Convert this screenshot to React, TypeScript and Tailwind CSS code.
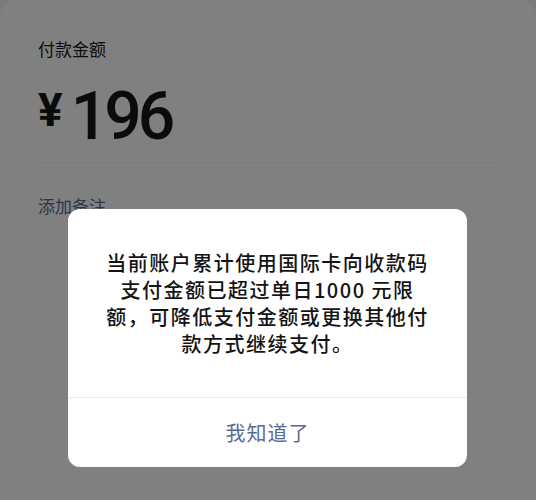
import React from 'react';

const cjk = { fontFamily: '"Noto Sans CJK SC", "Noto Sans", sans-serif' };
const num = { fontFamily: 'Roboto, "Noto Sans", sans-serif' };

function PayCard() {
  return (
    <div className="rounded-t-[16px] bg-[#808080] min-h-[500px] pt-[37px] px-[38px]" style={cjk}>
      <div className="text-[17px] leading-[24px] text-[#0d0d0d]">付款金额</div>

      <div className="flex items-start mt-[23px] text-[#0b0b0b]" style={num}>
        <span className="text-[46px] leading-none font-bold mt-[3px] mr-[8px]">¥</span>
        <span className="text-[66px] leading-none font-medium tracking-[-4px]">196</span>
      </div>

      <div className="mt-[15px] h-px bg-[#868686]" />

      <div className="mt-[28px] text-[17px] leading-[24px] text-[#2c364b]">添加备注</div>
    </div>
  );
}

function LimitDialog() {
  return (
    <div
      className="absolute left-[68px] top-[209px] w-[399px] rounded-[12px] bg-white overflow-hidden"
      style={cjk}
    >
      <p className="pt-[40px] pb-[40px] px-[30px] text-center text-[20px] leading-[27px] tracking-[1.5px] font-medium text-[#141414]">
        当前账户累计使用国际卡向收款码
        <br />
        支付金额已超过单日1000 元限
        <br />
        额，可降低支付金额或更换其他付
        <br />
        款方式继续支付。
      </p>
      <div className="h-px bg-[#ececec]" />
      <button type="button" className="w-full h-[69px] text-[20px] tracking-[1px] text-[#576b95]">
        我知道了
      </button>
    </div>
  );
}

export default function App() {
  return (
    <div className="relative w-[536px] h-[500px] overflow-hidden bg-[#7b7b7b]">
      <PayCard />
      <LimitDialog />
    </div>
  );
}
